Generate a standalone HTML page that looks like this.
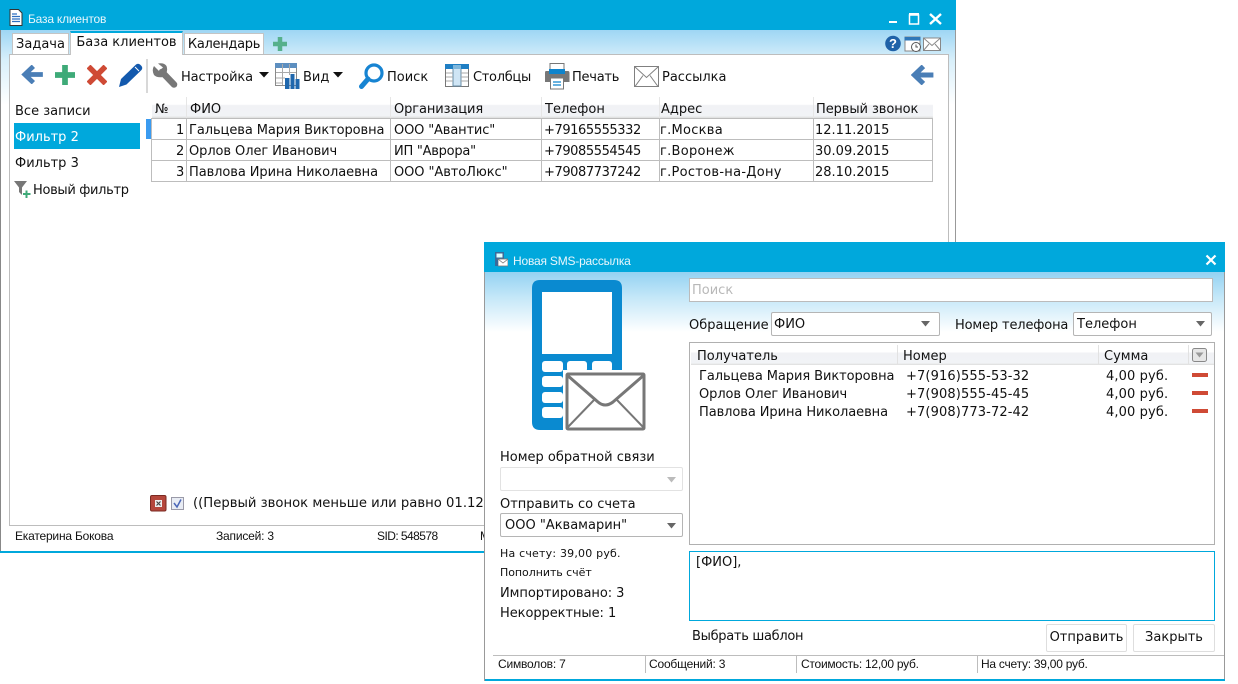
<!DOCTYPE html>
<html><head><meta charset="utf-8"><style>
html,body{margin:0;padding:0;background:#fff}
#r{position:relative;width:1238px;height:684px;overflow:hidden;background:#fff;font-family:"DejaVu Sans","Liberation Sans",sans-serif;font-size:13px;color:#111}
#r div,#r svg{position:absolute}
.t{white-space:nowrap;line-height:16px;height:16px;margin-top:1px}
.s{font-family:"Liberation Sans",sans-serif;font-size:12px;letter-spacing:-.2px;margin-top:0}
.l{background:#bdbdbd}
.sel{background:#fff;border:1px solid #b5b5b5;border-radius:2px;box-sizing:border-box}
.hd{background:linear-gradient(#fff 0,#fff 35%,#f1f2f5 40%,#f1f3f6 90%,#dcdcdc 100%)}
.btn{background:#fff;border:1px solid #dedede;box-sizing:border-box;border-radius:2px;text-align:center;line-height:26px}
.n{letter-spacing:-.08px}
.p{letter-spacing:-.42px}
.a{letter-spacing:.28px}
.q{letter-spacing:.12px}
</style></head><body><div id="r">

<!-- Window 1 -->
<div style="left:0;top:0;width:956px;height:553px;background:linear-gradient(#9ed6f4 30px,#d8effa 60px,#fff 105px);border-left:1px solid #888;border-right:1px solid #999;box-sizing:border-box"></div>
<div style="left:0;top:0;width:956px;height:30px;background:#00a8dc"></div>
<div style="left:0;top:551px;width:956px;height:2px;background:#00a8dc"></div>
<svg style="left:9px;top:9px" width="14" height="17" viewBox="0 0 14 17"><path d="M1 .5H9.500L13 4V16.500H1Z" fill="#fff" stroke="#333" stroke-width="1"/><path d="M3 5H8M3 7.500H11M3 10H11M3 12.500H11" stroke="#2e6fc0" stroke-width="1.300"/></svg>
<div class="t s" style="left:28px;top:11px;color:#e8f6fc;font-size:12px">База клиентов</div>
<svg style="left:885px;top:10px" width="60" height="18" viewBox="0 0 60 18"><path d="M4 12H12" stroke="#fff" stroke-width="2"/><rect x="24.500" y="5" width="9" height="9" fill="none" stroke="#fff" stroke-width="1.500"/><path d="M24 4h10" stroke="#fff" stroke-width="2"/><path d="M45 4L56 14M56 4L45 14" stroke="#fff" stroke-width="2.400"/></svg>

<!-- panel -->
<div style="left:9px;top:54px;width:940px;height:472px;background:#fff;border:1px solid #bdbdbd;box-sizing:border-box"></div>
<!-- tabs -->
<div class="t" style="left:12px;top:33px;width:57px;height:21px;background:#fff;border:1px solid #c4c4c4;border-bottom:none;box-sizing:border-box;line-height:21px;text-align:center;font-size:13px;margin-top:0">Задача</div>
<div class="t" style="left:70px;top:31px;width:113px;height:24px;background:#fff;border-top:2px solid #00a8dc;border-left:1px solid #c4c4c4;border-right:1px solid #c4c4c4;box-sizing:border-box;line-height:20px;text-align:center;font-size:13px;margin-top:0">База клиентов</div>
<div class="t" style="left:184px;top:33px;width:80px;height:21px;background:#fff;border:1px solid #c4c4c4;border-bottom:none;box-sizing:border-box;line-height:21px;text-align:center;font-size:13px;margin-top:0;letter-spacing:-.3px">Календарь</div>
<svg style="left:273px;top:37px" width="14" height="14" viewBox="0 0 14 14"><path d="M7 0V14M0 7H14" stroke="#56b08c" stroke-width="4.500"/></svg>
<!-- top right icons -->
<svg style="left:885px;top:35px" width="57" height="18" viewBox="0 0 57 18"><circle cx="8" cy="8.500" r="7.800" fill="#1f62a8"/><text x="8" y="13" font-family="Liberation Sans" font-weight="bold" font-size="13" fill="#fff" text-anchor="middle">?</text><rect x="20" y="2" width="15" height="14" fill="#fff" stroke="#888"/><rect x="19.500" y="2" width="16" height="3.500" fill="#2f77b8"/><circle cx="31" cy="12" r="4.500" fill="#fff" stroke="#555"/><path d="M31 9.500V12H33" stroke="#555" fill="none"/><rect x="38.500" y="3" width="17" height="12.500" fill="#fff" stroke="#888"/><path d="M38.500 3L47 10.500L55.500 3M38.500 15.500L44 9M55.500 15.500L50 9" stroke="#888" fill="none"/></svg>
<!-- toolbar icons -->
<svg style="left:21px;top:65px" width="23" height="19" viewBox="0 0 24 22"><path d="M24 11H7M13 1.500L3 11L13 20.500" fill="none" stroke="#4a7eb6" stroke-width="5.500"/></svg>
<svg style="left:55px;top:65px" width="20" height="20" viewBox="0 0 21 21"><path d="M10.500 0V21M0 10.500H21" stroke="#3eaa78" stroke-width="6"/></svg>
<svg style="left:87px;top:65px" width="20" height="20" viewBox="0 0 20 20"><path d="M1.500 1.500L18.500 18.500M18.500 1.500L1.500 18.500" stroke="#cf4a35" stroke-width="5.500"/></svg>
<svg style="left:118px;top:62px" width="25" height="26" viewBox="0 0 25 26"><path d="M1 25L3 17L18 2.500Q20 1 22 2.500L23.500 4Q25 6 23.500 8L8.500 22.500Z" fill="#1359ad"/><path d="M17 5L21 9" stroke="#fff" stroke-width="1"/></svg>
<div style="left:146px;top:59px;width:2px;height:34px;background:#d8d8d8"></div>
<svg style="left:152px;top:63px" width="26" height="25" viewBox="0 0 26 25"><path d="M10 9L22 21.500" stroke="#777" stroke-width="6.500" stroke-linecap="round"/><path d="M2 3L7 8L11 4.500L6 .5Q12 -.5 14.500 3Q16 7 14 11L11 14Q5 15 2 12Q-.5 7 2 3Z" fill="#777"/></svg>
<svg style="left:259px;top:72px" width="10" height="6" viewBox="0 0 10 6"><path d="M0 0H10L5 5.500Z" fill="#111"/></svg>
<svg style="left:275px;top:63px" width="25" height="26" viewBox="0 0 25 26"><rect x=".500" y=".500" width="21" height="22" fill="#fff" stroke="#8a8a8a"/><rect x="0" y="0" width="22" height="5" fill="#5d8fc0"/><path d="M7.500 1V22M14.500 1V12M1 9.500H21M1 15H10M1 20H8" stroke="#aaa"/><rect x="10" y="15" width="4.500" height="11" fill="#1f67ad"/><rect x="15.500" y="11" width="4" height="15" fill="#1f67ad"/><rect x="20.500" y="16" width="4" height="10" fill="#1f67ad" /></svg>
<svg style="left:333px;top:72px" width="10" height="6" viewBox="0 0 10 6"><path d="M0 0H10L5 5.500Z" fill="#111"/></svg>
<svg style="left:359px;top:63px" width="25" height="26" viewBox="0 0 25 26"><circle cx="15" cy="10" r="8" fill="#fff" stroke="#1784d2" stroke-width="3.200"/><path d="M9 16L2.500 23.500" stroke="#1784d2" stroke-width="5" stroke-linecap="round"/></svg>
<svg style="left:445px;top:64px" width="25" height="24" viewBox="0 0 25 24"><rect x=".500" y=".500" width="23" height="22" fill="#fff" stroke="#777"/><rect x="8" y="1" width="8" height="21" fill="#cfe5f5" stroke="#6a8ea8"/><rect x="0" y="0" width="24" height="5" fill="#1f7fc4"/><rect x="8" y="1" width="8" height="4" fill="#7fb7dc"/><path d="M1 9H8M1 13H8M1 17H8M16 9H23M16 13H23M16 17H23" stroke="#aaa"/></svg>
<svg style="left:544px;top:63px" width="26" height="27" viewBox="0 0 26 27"><rect x="6" y=".500" width="14" height="8" fill="#fff" stroke="#777"/><path d="M2 8H24Q25.500 8 25.500 10V19H1V10Q1 8 2 8Z" fill="#777"/><rect x="5" y="6" width="16" height="5" fill="#0f84cc"/><rect x="6.500" y="15" width="13" height="11" fill="#fff" stroke="#777"/><path d="M9 19H17M9 22H17" stroke="#0f84cc" stroke-width="1.300"/></svg>
<svg style="left:634px;top:66px" width="25" height="21" viewBox="0 0 25 21"><rect x=".500" y=".500" width="24" height="20" fill="#fff" stroke="#808080"/><path d="M1 1L12.500 11.500L24 1M1 20.500L9 9.500M24 20.500L16 9.500" fill="none" stroke="#808080"/></svg>
<svg style="left:911px;top:65px" width="23" height="20" viewBox="0 0 24 22"><path d="M24 11H7M13 1.500L3 11L13 20.500" fill="none" stroke="#4a7eb6" stroke-width="5.500"/></svg>

<div class="t" style="left:181px;top:69px;letter-spacing:-.1px">Настройка</div>
<div class="t" style="left:303px;top:69px">Вид</div>
<div class="t" style="left:387px;top:69px">Поиск</div>
<div class="t" style="left:473px;top:69px;letter-spacing:-.3px">Столбцы</div>
<div class="t" style="left:572px;top:69px;letter-spacing:-.25px">Печать</div>
<div class="t" style="left:662px;top:69px">Рассылка</div>

<!-- sidebar -->
<div class="t" style="left:15px;top:103px">Все записи</div>
<div style="left:14px;top:123px;width:126px;height:26px;background:#00a8dc"></div>
<div class="t" style="left:15px;top:129px;color:#fff">Фильтр 2</div>
<div class="t" style="left:15px;top:155px">Фильтр 3</div>
<svg style="left:14px;top:181px" width="17" height="17" viewBox="0 0 17 17"><path d="M0 0H13L8 6.500V14L5 11V6.500Z" fill="#777"/><path d="M12.500 9.500V17M9 13H16.500" stroke="#3eaa78" stroke-width="2"/></svg>
<div class="t" style="left:33px;top:182px;letter-spacing:-.33px">Новый фильтр</div>

<!-- table -->
<div class="hd" style="left:152px;top:97px;width:781px;height:21px"></div>
<div style="left:146px;top:119px;width:5px;height:20px;background:#3a9bf0"></div>
<div class="l" style="left:151px;top:118px;width:782px;height:1px"></div>
<div class="l" style="left:151px;top:139px;width:782px;height:1px"></div>
<div class="l" style="left:151px;top:160px;width:782px;height:1px"></div>
<div class="l" style="left:151px;top:181px;width:782px;height:1px"></div>
<div class="l" style="left:151px;top:118px;width:1px;height:64px"></div>
<div class="l" style="left:186px;top:118px;width:1px;height:64px"></div>
<div class="l" style="left:390px;top:118px;width:1px;height:64px"></div>
<div class="l" style="left:541px;top:118px;width:1px;height:64px"></div>
<div class="l" style="left:659px;top:118px;width:1px;height:64px"></div>
<div class="l" style="left:813px;top:118px;width:1px;height:64px"></div>
<div class="l" style="left:932px;top:118px;width:1px;height:64px"></div>
<div style="left:186px;top:97px;width:1px;height:21px;background:#e6e6e6"></div>
<div style="left:390px;top:97px;width:1px;height:21px;background:#e6e6e6"></div>
<div style="left:541px;top:97px;width:1px;height:21px;background:#e6e6e6"></div>
<div style="left:659px;top:97px;width:1px;height:21px;background:#e6e6e6"></div>
<div style="left:813px;top:97px;width:1px;height:21px;background:#e6e6e6"></div>
<div class="t" style="left:155px;top:101px">№</div>
<div class="t" style="left:190px;top:101px">ФИО</div>
<div class="t" style="left:394px;top:101px;letter-spacing:-.1px">Организация</div>
<div class="t" style="left:545px;top:101px">Телефон</div>
<div class="t" style="left:661px;top:101px">Адрес</div>
<div class="t" style="left:816px;top:101px;letter-spacing:-.08px">Первый звонок</div>

<div class="t" style="left:176px;top:122px">1</div><div class="t n" style="left:189px;top:122px">Гальцева Мария Викторовна</div><div class="t" style="left:394px;top:122px;letter-spacing:-.15px">ООО "Авантис"</div><div class="t p" style="left:544px;top:122px">+79165555332</div><div class="t a" style="left:660px;top:122px">г.Москва</div><div class="t" style="left:815px;top:122px">12.11.2015</div>
<div class="t" style="left:176px;top:143px">2</div><div class="t n" style="left:189px;top:143px">Орлов Олег Иванович</div><div class="t" style="left:394px;top:143px;letter-spacing:-.25px">ИП "Аврора"</div><div class="t p" style="left:544px;top:143px">+79085554545</div><div class="t a" style="left:660px;top:143px">г.Воронеж</div><div class="t" style="left:815px;top:143px">30.09.2015</div>
<div class="t" style="left:176px;top:164px">3</div><div class="t n" style="left:189px;top:164px">Павлова Ирина Николаевна</div><div class="t n" style="left:394px;top:164px">ООО "АвтоЛюкс"</div><div class="t p" style="left:544px;top:164px">+79087737242</div><div class="t a" style="left:660px;top:164px">г.Ростов-на-Дону</div><div class="t" style="left:815px;top:164px">28.10.2015</div>

<!-- filter line -->
<svg style="left:150px;top:495px" width="36" height="17" viewBox="0 0 36 17"><rect x=".500" y=".500" width="15.500" height="15.500" rx="1.500" fill="#b5473c" stroke="#7a2a22"/><rect x="5" y="5" width="7" height="7" fill="#eee"/><path d="M6.500 6.500L10.500 10.500M10.500 6.500L6.500 10.500" stroke="#444" stroke-width="1.200"/><rect x="21.500" y="2.500" width="12" height="12" fill="#e8ecf4" stroke="#9a9aa8"/><path d="M24 8L27 12L31 4.500" fill="none" stroke="#4a66b8" stroke-width="1.500"/></svg>
<div class="t" style="left:193px;top:495px;font-size:13.200px">((Первый звонок меньше или равно 01.12.2015</div>

<!-- status 1 -->
<div class="t s" style="left:15px;top:528px">Екатерина Бокова</div>
<div class="t s" style="left:216px;top:528px">Записей: 3</div>
<div class="t s" style="left:377px;top:528px;letter-spacing:-.55px">SID: 548578</div>
<div class="t s" style="left:480px;top:528px">М</div>

<!-- Window 2 -->
<div style="left:484px;top:242px;width:741px;height:439px;background:linear-gradient(#93d2f2 30px,#c4e7f8 55px,#fff 90px);border-left:1px solid #999;border-right:1px solid #999;box-sizing:border-box"></div>
<div style="left:484px;top:242px;width:741px;height:30px;background:#00a8dc"></div>
<div style="left:485px;top:679px;width:740px;height:2px;background:#00a8dc"></div>
<svg style="left:494px;top:252px" width="14" height="15" viewBox="0 0 14 15"><rect x="1" y="0" width="9" height="8" fill="#3a6a9a"/><rect x="2.500" y="1.500" width="6" height="4" fill="#dff"/><rect x="4" y="7" width="10" height="7" fill="#fff" stroke="#777" stroke-width=".8"/><path d="M4 7L9 11L14 7" stroke="#777" fill="none" stroke-width=".8"/><rect x="1" y="8" width="3" height="6" fill="#3a6a9a"/></svg>
<div class="t s" style="left:513px;top:253px;color:#e8f6fc;font-size:12px">Новая SMS-рассылка</div>
<svg style="left:1205px;top:254px" width="12" height="12" viewBox="0 0 12 12"><path d="M1.500 1.500L10.500 10.500M10.500 1.500L1.500 10.500" stroke="#fff" stroke-width="2.200"/></svg>

<!-- phone -->
<svg style="left:532px;top:280px" width="114" height="151" viewBox="0 0 114 151">
<path d="M8 0H82Q90 0 90 8V150H8Q0 150 0 142V8Q0 0 8 0Z" fill="#0a8ad0"/>
<rect x="10" y="12" width="70" height="62" fill="#fff"/>
<rect x="10" y="81" width="21" height="11" rx="3" fill="#fff"/><rect x="35" y="81" width="20" height="11" rx="3" fill="#fff"/><rect x="60" y="81" width="20" height="11" rx="3" fill="#fff"/>
<rect x="10" y="96" width="21" height="11" rx="3" fill="#fff"/><rect x="10" y="112" width="21" height="11" rx="3" fill="#fff"/><rect x="10" y="127" width="21" height="11" rx="3" fill="#fff"/>
<rect x="31" y="90" width="60" height="61" fill="#fff"/>
<rect x="35" y="94" width="77" height="55" rx="1" fill="#fff" stroke="#777" stroke-width="3"/>
<path d="M35 95L66 122Q73 128 81 122L112 95" fill="none" stroke="#777" stroke-width="3"/>
<path d="M35 148L62 120M112 148L85 120" fill="none" stroke="#777" stroke-width="2"/>
</svg>

<!-- right top -->
<div style="left:689px;top:278px;width:524px;height:24px;background:#fff;border:1px solid #bbb;box-sizing:border-box"></div>
<div class="t" style="left:692px;top:282px;color:#b8b8b8">Поиск</div>
<div class="t" style="left:689px;top:317px">Обращение</div>
<div class="sel" style="left:771px;top:312px;width:169px;height:24px"></div>
<div class="t" style="left:774px;top:316px">ФИО</div>
<div class="t" style="left:955px;top:317px;letter-spacing:-.15px">Номер телефона</div>
<div class="sel" style="left:1073px;top:312px;width:139px;height:24px"></div>
<div class="t" style="left:1077px;top:316px">Телефон</div>
<svg style="left:921px;top:321px" width="10" height="6"><path d="M0 0H9L4.500 5.500Z" fill="#666"/></svg>
<svg style="left:1196px;top:321px" width="10" height="6"><path d="M0 0H9L4.500 5.500Z" fill="#666"/></svg>

<!-- list -->
<div style="left:689px;top:342px;width:526px;height:203px;background:#fff;border:1px solid #b0b0b0;box-sizing:border-box"></div>
<div class="hd" style="left:691px;top:345px;width:523px;height:20px"></div>
<div style="left:897px;top:345px;width:1px;height:20px;background:#e2e2e2"></div>
<div style="left:1098px;top:345px;width:1px;height:20px;background:#e2e2e2"></div>
<div style="left:1188px;top:345px;width:1px;height:20px;background:#e2e2e2"></div>
<svg style="left:1192px;top:348px" width="15" height="14" viewBox="0 0 15 14"><rect x=".500" y=".500" width="14" height="13" rx="2" fill="#e6e6e6" stroke="#888"/><path d="M3.500 4.500H11.500L7.500 9.500Z" fill="#999"/></svg>
<div class="t" style="left:697px;top:348px">Получатель</div>
<div class="t" style="left:903px;top:348px">Номер</div>
<div class="t" style="left:1104px;top:348px">Сумма</div>
<div class="t n" style="left:699px;top:368px">Гальцева Мария Викторовна</div><div class="t q" style="left:906px;top:368px">+7(916)555-53-32</div><div class="t q" style="left:1106px;top:368px">4,00 руб.</div>
<div class="t n" style="left:699px;top:386px">Орлов Олег Иванович</div><div class="t q" style="left:906px;top:386px">+7(908)555-45-45</div><div class="t q" style="left:1106px;top:386px">4,00 руб.</div>
<div class="t n" style="left:699px;top:404px">Павлова Ирина Николаевна</div><div class="t q" style="left:906px;top:404px">+7(908)773-72-42</div><div class="t q" style="left:1106px;top:404px">4,00 руб.</div>
<div style="left:1192px;top:373px;width:16px;height:4px;background:#cf4a35"></div>
<div style="left:1192px;top:391px;width:16px;height:4px;background:#cf4a35"></div>
<div style="left:1192px;top:409px;width:16px;height:4px;background:#cf4a35"></div>

<!-- left form -->
<div class="t" style="left:500px;top:449px">Номер обратной связи</div>
<div class="sel" style="left:500px;top:467px;width:183px;height:24px;border-color:#e2e2e2"></div>
<svg style="left:667px;top:477px" width="10" height="6"><path d="M0 0H9L4.500 5.500Z" fill="#bbb"/></svg>
<div class="t" style="left:500px;top:496px">Отправить со счета</div>
<div class="sel" style="left:500px;top:513px;width:183px;height:24px"></div>
<div class="t" style="left:505px;top:517px">ООО "Аквамарин"</div>
<svg style="left:667px;top:523px" width="10" height="6"><path d="M0 0H9L4.500 5.500Z" fill="#666"/></svg>
<div class="t" style="left:500px;top:545px;font-size:11px;letter-spacing:.2px">На счету: 39,00 руб.</div>
<div class="t" style="left:500px;top:564px;font-size:11px;letter-spacing:-.05px">Пополнить счёт</div>
<div class="t" style="left:500px;top:585px;letter-spacing:-.06px">Импортировано: 3</div>
<div class="t" style="left:500px;top:605px;letter-spacing:-.06px">Некорректные: 1</div>

<!-- textarea -->
<div style="left:689px;top:551px;width:526px;height:70px;background:#fff;border:1px solid #00a8dc;box-sizing:border-box"></div>
<div class="t" style="left:696px;top:554px">[ФИО],</div>
<div class="t" style="left:692px;top:628px;letter-spacing:-.3px">Выбрать шаблон</div>
<div class="btn" style="left:1046px;top:624px;width:81px;height:28px">Отправить</div>
<div class="btn" style="left:1133px;top:624px;width:82px;height:28px">Закрыть</div>

<!-- status 2 -->
<div class="l" style="left:493px;top:655px;width:731px;height:1px"></div>
<div class="l" style="left:645px;top:656px;width:1px;height:17px"></div>
<div class="l" style="left:796px;top:656px;width:1px;height:17px"></div>
<div class="l" style="left:977px;top:656px;width:1px;height:17px"></div>
<div class="t s" style="left:498px;top:656px">Символов: 7</div>
<div class="t s" style="left:649px;top:656px">Сообщений: 3</div>
<div class="t s" style="left:801px;top:656px;letter-spacing:-.25px">Стоимость: 12,00 руб.</div>
<div class="t s" style="left:981px;top:656px;letter-spacing:-.25px">На счету: 39,00 руб.</div>

</div></body></html>
